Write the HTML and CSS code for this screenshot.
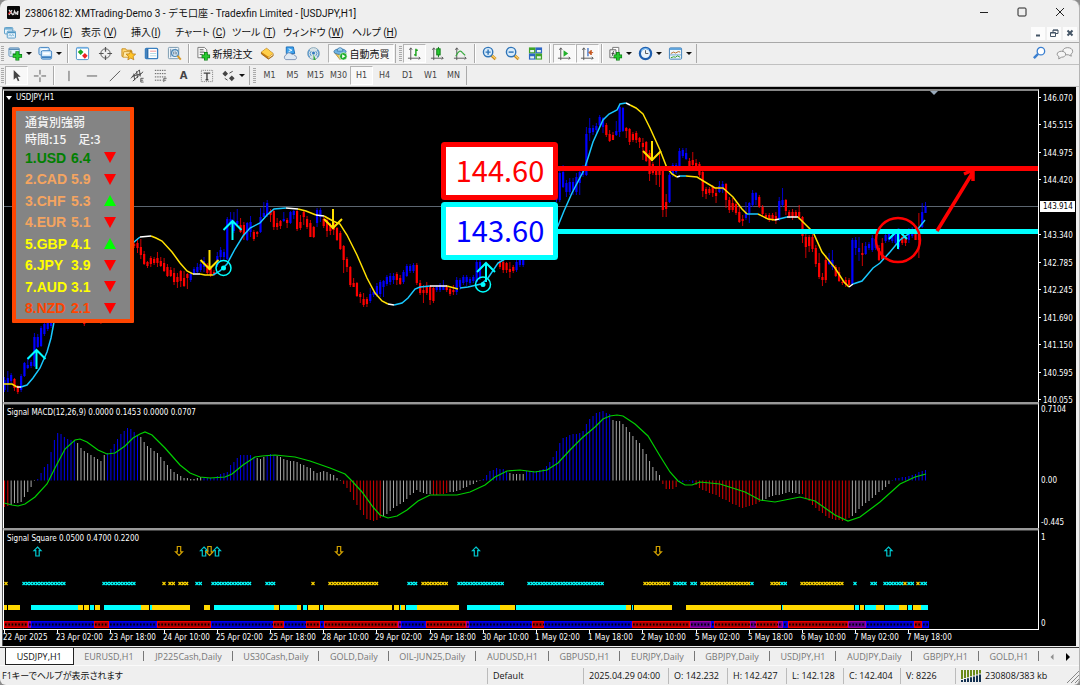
FILE: index.html
```html
<!DOCTYPE html>
<html lang="ja">
<head>
<meta charset="utf-8">
<title>23806182: XMTrading-Demo 3</title>
<link rel="stylesheet" href="styles.css">
</head>
<body>
<div class="window">
<header class="titlebar">
  <svg class="logo" viewBox="0 0 13 13"><rect width="13" height="13" rx="1" fill="#080808"/><path d="M2 4l4 5M5 4L2 9" stroke="#ddd" stroke-width="1.3"/><path d="M1.500 8l2-2" stroke="#e33" stroke-width="1.200"/><path d="M6.500 9l1-4 1.500 3 2-3-.5 4" stroke="#ddd" stroke-width="1.200" fill="none"/></svg>
  <h1>23806182: XMTrading-Demo 3 - デモ口座 - Tradexfin Limited - [USDJPY,H1]</h1>
  <div class="window-buttons">
    <button aria-label="最小化"><svg viewBox="0 0 10 10"><path d="M1 5.500h8" /></svg></button>
    <button aria-label="最大化"><svg viewBox="0 0 10 10"><rect x="1" y="1" width="8" height="8" rx="1"/></svg></button>
    <button aria-label="閉じる"><svg viewBox="0 0 10 10"><path d="M1 1l8 8M9 1L1 9"/></svg></button>
  </div>
</header>
<nav class="menubar">
  <svg class="menu-icon" viewBox="0 0 13 13" fill="#e8f4fc" stroke="#4f97c4"><rect x=".5" y=".5" width="9" height="7" rx="1"/><path d="M1 2h8" stroke-width="1.500"/><rect x="3.500" y="4.500" width="9" height="7.500" rx="1"/><path d="M4 6h8" stroke-width="1.500"/><path d="M5 10l1.500-2 1.500 2 1.500-2 1.500 2" fill="none" stroke-width=".7"/></svg>
  <div class="menus">
    <button>ファイル (<u>F</u>)</button><button>表示 (<u>V</u>)</button><button>挿入(<u>I</u>)</button><button>チャート (<u>C</u>)</button><button>ツール (<u>T</u>)</button><button>ウィンドウ (<u>W</u>)</button><button>ヘルプ (<u>H</u>)</button>
  </div>
  <div class="mdi-buttons">
    <button aria-label="チャート最小化"><svg viewBox="0 0 10 10"><path d="M3 7.500h4"/></svg></button>
    <button aria-label="チャート復元"><svg viewBox="0 0 10 10"><path d="M4 4V2h5v3.500H7M1.500 4.500h5v4h-5zM4 2.200h5M1.500 5h5" stroke-width="1"/></svg></button>
    <button aria-label="チャートを閉じる"><svg viewBox="0 0 10 10"><path d="M2.500 2.500l5 5M7.500 2.500l-5 5"/></svg></button>
  </div>
</nav>

<div class="toolbar">
  <i class="grip"></i>
  <button class="tool drop" aria-label="新規チャート"><svg viewBox="0 0 16 16"><rect x="1" y="2" width="11" height="9" rx="1" fill="#e6f2fb" stroke="#5b8db8"/><path d="M1 3.500h11" stroke="#5b8db8" stroke-width="1.500"/><path d="M3 9V5M5 8h4" stroke="#6a8" /><path d="M10 5.500v10M5 10.500h10" stroke="#0a7a12" stroke-width="4.200"/><path d="M10 6.200v8.600M5.700 10.500h8.600" stroke="#27c92f" stroke-width="2.600"/></svg><b></b></button>
  <button class="tool drop" aria-label="プロファイル"><svg viewBox="0 0 16 16" fill="#d5eafa" stroke="#3b7fc0"><rect x="1" y="1.500" width="11" height="8" rx="1.500"/><path d="M3.500 4h6" stroke="#fff" stroke-width="1.500"/><rect x="3.500" y="5" width="11" height="9" rx="1.500"/><path d="M4 12h10" stroke-width="2.200"/><path d="M5.500 8h7" stroke="#fff" stroke-width="2"/></svg><b></b></button>
  <i class="sep"></i>
  <button class="tool" aria-label="気配値表示"><svg viewBox="0 0 16 16"><rect x="1.500" y="1.500" width="13" height="13" rx="1.500" fill="#fff" stroke="#4a90cc"/><path d="M2 2.300h12" stroke="#7db8e8" stroke-width="1.500"/><path d="M6 3.500l3 3-3 3-3-3z" fill="#1ba824"/><path d="M10.500 7.500l3 3-3 3-3-3z" fill="#e22"/></svg></button>
  <button class="tool" aria-label="データウィンドウ"><svg viewBox="0 0 16 16" fill="none" stroke="#555"><circle cx="8" cy="8" r="5"/><path d="M8 1v5M8 10v5M1 8h5M10 8h5" stroke-width="1.300"/></svg></button>
  <button class="tool" aria-label="ナビゲーター"><svg viewBox="0 0 16 16"><path d="M1 3h4l1 1.500h5V11H1z" fill="#ffd97a" stroke="#c78b18"/><path d="M3 6h9l-2 6H2z" fill="#ffe9a8" stroke="#c78b18" stroke-width=".8"/><path d="M10.500 5l1.500 3.300 3.600.4-2.700 2.400.8 3.600-3.200-1.800-3.200 1.800.8-3.600-2.700-2.400 3.600-.4z" fill="#ffc52a" stroke="#b87a10" stroke-width=".8"/></svg></button>
  <button class="tool" aria-label="ターミナル"><svg viewBox="0 0 16 16"><rect x="1.500" y="2.500" width="13" height="11" rx="1" fill="#fff" stroke="#3a80c0" stroke-width="1.400"/><path d="M3.500 3v10" stroke="#2c6fae" stroke-width="2.400"/><path d="M6.500 5.500h6.500" stroke="#e77" stroke-width=".8"/><path d="M6.500 8h6.500M6.500 10.500h6.500" stroke="#9cd" stroke-width=".8"/></svg></button>
  <button class="tool" aria-label="ストラテジーテスター"><svg viewBox="0 0 16 16"><rect x="1.500" y="1.500" width="11" height="12" rx="1" fill="#eef5fa" stroke="#7796ac"/><path d="M4 3v9M6 4v3M9 3v2" stroke="#68a"/><circle cx="8.500" cy="7.500" r="3.700" fill="#cfe6f6" fill-opacity=".8" stroke="#4f88b5" stroke-width="1.200"/><path d="M7 6v3M8.700 5.500v3.500M10 6.500V9" stroke="#678" stroke-width=".8"/><path d="M11.200 10.500l3.500 4" stroke="#d99a26" stroke-width="2.200"/></svg></button>
  <i class="sep"></i>
  <button class="tool order"><svg viewBox="0 0 16 16"><path d="M2 1.500h7l2.500 2.500v8.500H2z" fill="#f8f8f8" stroke="#777"/><path d="M4 4h4M4 6.500h5M4 9h3" stroke="#555"/><path d="M10.500 6.500v9M6 11h9" stroke="#0a7a12" stroke-width="4"/><path d="M10.500 7.200v7.600M6.700 11h7.600" stroke="#27c92f" stroke-width="2.400"/></svg>新規注文</button>
  <button class="tool" aria-label="MetaEditor"><svg viewBox="0 0 16 16"><path d="M1.500 6.500L7 2.500l7 5.500v2.500L9 14 1.500 8.500z" fill="#c97f10" stroke="#8a5205" stroke-width=".7"/><path d="M1.500 6.500L7 2.500l7 5.500-5 3.500z" fill="#ffcf4a"/><path d="M9 12.500l5-3.500" stroke="#fff2c8"/></svg></button>
  <button class="tool" aria-label="クラウド"><svg viewBox="0 0 16 16"><path d="M3.500 1h7.500l1.500 7H3.500z" fill="#3fa4ee" stroke="#1a6cb8"/><path d="M6 3l3.500 1.500L6 6" stroke="#fff" fill="none"/><path d="M3 14.500a2.700 2.700 0 0 1 .3-5 3.300 3.300 0 0 1 6-.6 3 3 0 0 1 3.500 1.400A2.200 2.200 0 0 1 13 14.500z" fill="#dfe8f2" stroke="#7d93b5"/></svg></button>
  <button class="tool" aria-label="シグナル"><svg viewBox="0 0 16 16"><circle cx="8" cy="8" r="6.300" fill="#d7e3e8" stroke="#8aa7b8"/><path d="M4 12a6 6 0 0 1 0-8M12 12a6 6 0 0 0 0-8" stroke="#5e9bd0" fill="none" stroke-width="1.300"/><path d="M5.600 10.500a3.500 3.500 0 0 1 0-5M10.400 10.500a3.500 3.500 0 0 0 0-5" stroke="#4f90c8" fill="none"/><circle cx="8" cy="7.500" r="1.600" fill="#3279c0"/><path d="M8 8.500L10.500 15H8z" fill="#35a83c"/></svg></button>
  <button class="tool auto pressed"><svg viewBox="0 0 16 16"><path d="M1.500 7l6 7.500L14 8z" fill="#f0c858" stroke="#a57c1a" stroke-width=".7"/><ellipse cx="7.500" cy="6" rx="6.500" ry="3" fill="#6fb4e4" stroke="#2c6b9e" stroke-width=".8"/><path d="M4.500 5.500c0-5 6-5 6 0z" fill="#a4d4f4" stroke="#2c6b9e" stroke-width=".7"/><circle cx="11" cy="11" r="4" fill="#1fae2b" stroke="#fff" stroke-width=".6"/><path d="M9.800 8.900v4.200l3.400-2.100z" fill="#fff"/></svg>自動売買</button>
  <i class="edge"></i><i class="grip"></i>
  <button class="tool pressed" aria-label="バーチャート"><svg viewBox="0 0 16 16" fill="none"><path d="M4 2v13M1 13h13M2.500 4L4 2l1.500 2M12.500 11.500L14 13l-1.500 1.500" stroke="#555"/><path d="M9.500 3v8M7.500 9.500h2M9.500 4.500h2" stroke="#16a016" stroke-width="1.500"/></svg></button>
  <button class="tool" aria-label="ローソク足"><svg viewBox="0 0 16 16" fill="none"><path d="M4 2v13M1 13h13M2.500 4L4 2l1.500 2M12.500 11.500L14 13l-1.500 1.500" stroke="#555"/><path d="M9 1v11" stroke="#0a7a12"/><rect x="7.200" y="3" width="3.600" height="6.500" fill="#27c92f" stroke="#0a7a12"/></svg></button>
  <button class="tool" aria-label="ラインチャート"><svg viewBox="0 0 16 16" fill="none"><path d="M4 2v13M1 13h13M2.500 4L4 2l1.500 2M12.500 11.500L14 13l-1.500 1.500" stroke="#555"/><path d="M3 11c3-6 5-7 7-4l3 3" stroke="#35a83c" stroke-width="1.300"/></svg></button>
  <i class="sep"></i>
  <button class="tool" aria-label="ズームイン"><svg viewBox="0 0 16 16"><path d="M9.500 9.500l5 4.500" stroke="#c98a1c" stroke-width="3"/><path d="M10 9.500l4.500 4" stroke="#ffd772" stroke-width="1.300"/><circle cx="6.500" cy="6.500" r="5" fill="#d8ecfb" stroke="#2f74b8" stroke-width="1.500"/><path d="M3.800 6.500h5.400M6.500 3.800v5.400" stroke="#2f74b8" stroke-width="1.500"/></svg></button>
  <button class="tool" aria-label="ズームアウト"><svg viewBox="0 0 16 16"><path d="M9.500 9.500l5 4.500" stroke="#c98a1c" stroke-width="3"/><path d="M10 9.500l4.500 4" stroke="#ffd772" stroke-width="1.300"/><circle cx="6.500" cy="6.500" r="5" fill="#d8ecfb" stroke="#2f74b8" stroke-width="1.500"/><path d="M3.800 6.500h5.400" stroke="#2f74b8" stroke-width="1.500"/></svg></button>
  <button class="tool" aria-label="整列"><svg viewBox="0 0 16 16"><rect x="1" y="1.500" width="7" height="6.500" fill="#3fa428"/><rect x="8" y="1.500" width="7" height="6.500" fill="#2c66c4"/><rect x="1" y="8" width="7" height="6.500" fill="#2c66c4"/><rect x="8" y="8" width="7" height="6.500" fill="#3fa428"/><path d="M2.300 5.500h4.200M9.500 5.500h4.200M2.300 12h4.200M9.500 12h4.200" stroke="#e8f5ee" stroke-width="2.400"/></svg></button>
  <i class="sep"></i>
  <button class="tool pressed" aria-label="自動スクロール"><svg viewBox="0 0 16 16" fill="none"><path d="M4 2v13M1 13h13M2.500 4L4 2l1.500 2M12.500 11.500L14 13l-1.500 1.500" stroke="#555"/><path d="M7 4.500v7l5-3.500z" fill="#22b02c"/></svg></button>
  <button class="tool pressed" aria-label="チャートシフト"><svg viewBox="0 0 16 16" fill="none"><path d="M4 2v13M1 13h13M2.500 4L4 2l1.500 2M12.500 11.500L14 13l-1.500 1.500" stroke="#555"/><path d="M8.500 2v9" stroke="#2c66c4" stroke-width="1.300"/><path d="M9.500 7L12 4.500v5zM12 7h2" fill="#c4541c" stroke="#c4541c"/></svg></button>
  <i class="sep"></i>
  <button class="tool drop" aria-label="インディケータ"><svg viewBox="0 0 16 16"><path d="M5 1.500h6.500V10H5z" fill="#fff" stroke="#777"/><path d="M2 4h6.500v8.500H2z" fill="#f4f4f4" stroke="#666"/><path d="M6.500 5.500c-2 0-1 5.500-2.500 5.500M3.800 8h3" stroke="#444" fill="none"/><path d="M10.500 6.500v9M6 11h9" stroke="#0a7a12" stroke-width="4"/><path d="M10.500 7.200v7.600M6.700 11h7.600" stroke="#27c92f" stroke-width="2.400"/></svg><b></b></button>
  <button class="tool drop" aria-label="時間足"><svg viewBox="0 0 16 16"><circle cx="8" cy="8" r="6" fill="#e9f3fb" stroke="#1f5fae" stroke-width="2.400"/><path d="M3.500 5a5.500 5.500 0 0 1 8-1" stroke="#74b7f0" fill="none" stroke-width="1.200"/><path d="M8 4.500V8h3" stroke="#555" fill="none"/></svg><b></b></button>
  <button class="tool drop" aria-label="定型チャート"><svg viewBox="0 0 16 16"><rect x="1.500" y="2" width="13" height="12" rx="1" fill="#eef7fd" stroke="#3a7cb8"/><path d="M2 3.200h12" stroke="#5ba0da" stroke-width="2"/><path d="M3 8l3-1.500 2 1 3-1.500 2 .5" stroke="#b5651d" fill="none"/><path d="M2 9.500h12" stroke="#3a7cb8" stroke-width=".7"/><path d="M3 12.500l3-1 2 .5 2-1.500 3 1.500" stroke="#2f9a28" fill="none"/></svg><b></b></button>
  <i class="edge"></i>
  <span class="spacer"></span>
  <button class="tool" aria-label="検索"><svg viewBox="0 0 16 16" fill="none" stroke="#3a7fd0"><circle cx="9.500" cy="5.500" r="4" fill="#fff" stroke-width="1.400"/><path d="M6.500 8.500L2 13" stroke-width="2.600"/></svg></button>
  <button class="tool chat" aria-label="チャット"><svg viewBox="0 0 20 16" fill="#f6f6f6" stroke="#8a8a8a"><path d="M13 1.500c3 0 5.500 1.600 5.500 4 0 1.500-.8 2.600-2 3.200L17 11l-3-1.500c-4 .3-6.500-1.500-6.500-4 0-2.400 2.500-4 5.500-4z"/><path d="M6 5.500c2.700 0 4.700 1.300 4.700 3.300 0 2.100-2 3.400-4.500 3.300L3 14l.3-2.700c-1.200-.5-2-1.300-2-2.500C1.300 6.800 3.500 5.500 6 5.500z"/></svg></button>
</div>

<div class="toolbar lines">
  <i class="grip"></i>
  <button class="tool pressed" aria-label="カーソル"><svg viewBox="0 0 16 16"><path d="M5 2v10.500l2.600-2.400 1.900 4 1.600-.8-1.900-3.900h3.200z" fill="#444"/></svg></button>
  <button class="tool" aria-label="クロスヘア"><svg viewBox="0 0 16 16" stroke="#555"><path d="M8.500 2v5M8.500 10v5M2 8.500h5M10 8.500h5"/></svg></button>
  <i class="sep"></i>
  <button class="tool" aria-label="垂直線"><svg viewBox="0 0 16 16" stroke="#555"><path d="M8.500 3v11"/></svg></button>
  <button class="tool" aria-label="水平線"><svg viewBox="0 0 16 16" stroke="#555"><path d="M3 8.500h11"/></svg></button>
  <button class="tool" aria-label="トレンドライン"><svg viewBox="0 0 16 16" stroke="#555"><path d="M3 14L14 3"/></svg></button>
  <button class="tool" aria-label="チャネル"><svg viewBox="0 0 16 16" stroke="#444" fill="none"><path d="M1 11L10 2M3 14L14 4M4 6l1 7M7 3.500l1 7M10 2l1 7M2 9l10-3"/><path d="M14.500 11h-3v4h3M11.500 13h2.500" stroke-width=".9"/></svg></button>
  <button class="tool" aria-label="フィボナッチ"><svg viewBox="0 0 16 16" stroke="#555" fill="none"><path d="M2 2.500h12M2 6h12M2 9.500h12M2 13h8" stroke-dasharray="1.500 1"/><path d="M11.500 15v-4h3M11.500 13h2.500" stroke-width=".9"/></svg></button>
  <button class="tool letter">A</button>
  <button class="tool" aria-label="テキストラベル"><svg viewBox="0 0 16 16" fill="none"><rect x="2.500" y="2.500" width="12" height="12" stroke="#777" stroke-dasharray="1 1"/><path d="M5 5.500h7M8.500 5.500V13M7 12.500h3" stroke="#444" stroke-width="1.500"/></svg></button>
  <button class="tool drop" aria-label="矢印"><svg viewBox="0 0 16 16" fill="#444"><path d="M4.500 3l3 3-3 3-3-3zM11.500 8l3 3-3 3-3-3z"/><path d="M9 5.500l3.500-2M4 11l3 2" stroke="#444"/></svg><b></b></button>
  <i class="edge"></i><i class="grip wide"></i>
  <button class="tool">M1</button><button class="tool">M5</button><button class="tool">M15</button><button class="tool">M30</button><button class="tool pressed">H1</button><button class="tool">H4</button><button class="tool">D1</button><button class="tool">W1</button><button class="tool">MN</button>
  <i class="edge"></i>
</div>

<main class="chart">
  <section class="pane">
    <div class="plot top">
      <svg id="price" viewBox="4 91 1034 311"></svg>
      <div class="symbol">USDJPY,H1</div>
      <div class="strength">
        <div class="strength-head"><div>通貨別強弱</div><div>時間:15　足:3</div></div>
        <ul id="ranks"></ul>
      </div>
    </div>
    <div class="scale prices"><span>146.070</span><span>145.515</span><span>144.975</span><span>144.420</span><span class="now">143.914</span><span>143.340</span><span>142.785</span><span>142.245</span><span>141.690</span><span>141.150</span><span>140.595</span><span>140.055</span></div>
  </section>
  <section class="pane">
    <div class="plot">
      <svg id="macd" viewBox="4 405 1034 123"></svg>
      <div class="caption">Signal MACD(12,26,9) 0.0000 0.1453 0.0000 0.0707</div>
    </div>
    <div class="scale levels"><span>0.7104</span><span>0.00</span><span>-0.445</span></div>
  </section>
  <section class="pane">
    <div class="plot">
      <svg id="square" viewBox="4 531 1034 98"></svg>
      <div class="caption">Signal Square 0.0500 0.4700 0.2200</div>
    </div>
    <div class="scale ends"><span>1</span><span>0</span></div>
  </section>
  <svg id="times" class="times" viewBox="3 629 1073 17"></svg>
</main>

<nav class="tabs">
  <a class="active" href="#t1">USDJPY,H1</a><a href="#t2">EURUSD,H1</a><a href="#t3">JP225Cash,Daily</a><a href="#t4">US30Cash,Daily</a><a href="#t5">GOLD,Daily</a><a href="#t6">OIL-JUN25,Daily</a><a href="#t7">AUDUSD,H1</a><a href="#t8">GBPUSD,H1</a><a href="#t9">EURJPY,Daily</a><a href="#t10">GBPJPY,Daily</a><a href="#t11">USDJPY,H1</a><a href="#t12">AUDJPY,Daily</a><a href="#t13">GBPJPY,H1</a><a href="#t14">GOLD,H1</a>
  <div class="tab-scroll"><button class="off" aria-label="前へ"><svg viewBox="0 0 6 8"><path d="M4.500 1v6L1.500 4z"/></svg></button><button aria-label="次へ"><svg viewBox="0 0 6 8"><path d="M1 0v8l4-4z"/></svg></button></div>
</nav>
<footer class="status">
  <span>F1キーでヘルプが表示されます</span><span>Default</span><span>2025.04.29 04:00</span><span>O: 142.232</span><span>H: 142.427</span><span>L: 142.128</span><span>C: 142.404</span><span>V: 8226</span>
  <span class="net"><svg id="signal" viewBox="0 0 20 12"></svg>230808/383 kb<svg class="resize" viewBox="0 0 14 14" stroke="#888"><path d="M2 14L14 2M6 14l8-8M10 14l4-4"/></svg></span>
</footer>
</div>
<script src="chart.js"></script>
</body>
</html>
```
FILE: styles.css
```css
* { box-sizing: border-box; }
body { margin: 0; background: #8c8c8c; font-family: "Open Sans", "Noto Sans CJK JP", sans-serif; font-size: 10px; color: #111; }
button { border: 0; padding: 0; margin: 0; background: none; font: inherit; color: inherit; white-space: nowrap; }
svg { display: block; }
.window { background: #efefef; border-right: 1px solid #b4b4b4; border-radius: 8px 8px 6px 6px; overflow: hidden; }

.titlebar { display: flex; align-items: center; height: 24px; padding-left: 7px; }
.logo { width: 13px; height: 13px; }
.titlebar h1 { margin: 0 0 0 5px; font-size: 10px; font-weight: 400; font-family: Roboto, "Noto Sans CJK JP", sans-serif; white-space: nowrap; }
.window-buttons { display: flex; margin-left: auto; }
.window-buttons button { width: 38px; display: grid; place-items: center; }
.window-buttons svg { width: 10px; height: 10px; fill: none; stroke: #222; }

.menubar { display: flex; align-items: center; height: 19px; padding-left: 4px; border-bottom: 1px solid #a8a8a8; }
.menu-icon { width: 12px; height: 12px; margin-right: 7px; }
.menus { display: grid; grid-template-columns: 58px 50px 44px 57px 51px 69px 50px; font-family: Roboto, "Noto Sans CJK JP", sans-serif; font-feature-settings: "palt"; }
.menus button { text-align: left; line-height: 16px; }
.mdi-buttons { display: flex; gap: 2px; margin-left: auto; padding-right: 2px; }
.mdi-buttons button { width: 14px; height: 13px; display: grid; place-items: center; background: #fcfcfc; }
.mdi-buttons svg { width: 10px; height: 10px; fill: none; stroke: #456; stroke-width: 2; }

.toolbar { display: flex; align-items: stretch; height: 22px; padding: 1px 0 1px 1px; border-bottom: 1px solid #c0c0c0; }
.grip { width: 3px; margin: 2px 1px 2px 0; background: repeating-linear-gradient(#aaa 0 1px, #eee 1px 2px); }
.grip.wide { margin-right: 2px; }
.sep { width: 6px; background: linear-gradient(90deg, transparent 2px, #aaa 2px 3px, #fff 3px 4px, transparent 4px); }
.edge { width: 5px; background: linear-gradient(90deg, transparent 1px, #aaa 1px 2px, transparent 2px); }
.tool { width: 23px; display: flex; align-items: center; justify-content: center; flex: none; }
.tool svg { width: 15px; height: 15px; flex: none; }
.drop { width: 30px; justify-content: flex-start; padding-left: 3px; }
.drop b { border: 3px solid transparent; border-top-color: #111; border-bottom: 0; margin-left: 3px; }
.pressed { background: #f8f8f8; border: 1px solid #fff; border-top-color: #b4b4b4; border-left-color: #b4b4b4; }
.order { width: 64px; gap: 2px; }
.auto { width: 66px; gap: 2px; margin-left: 3px; }
.spacer { flex: 1; }
.chat { width: 28px; }
.chat svg { width: 18px; height: 15px; }
.lines { font-family: "DejaVu Sans", sans-serif; font-size: 8px; color: #444; }
.letter { font-size: 10px; font-weight: 700; }

.chart { margin: 0 3px 0 2px; padding-top: 2px; background: #000; border-left: 1px solid #555; color: #fff; font: 8px/8px "DejaVu Sans Condensed", "DejaVu Sans", sans-serif; font-stretch: condensed; }
.pane { display: flex; }
.plot { position: relative; flex: 1; border-left: 1px solid #fff; border-right: 1px solid #fff; border-top: 3px ridge #999; }
.plot.top { border-top: 2px solid #888; }
.plot > svg { width: 100%; height: auto; }
.symbol, .caption { position: absolute; left: 3px; top: 4px; line-height: 8px; }
.symbol { left: 12px; top: 3px; }
.symbol::before { content: ""; position: absolute; left: -10px; top: 2px; border: 3px solid transparent; border-top: 4px solid #fff; border-bottom: 0; }
.scale { width: 37px; display: flex; flex-direction: column; justify-content: space-between; padding: 4px 0 1px 2px; }
.levels { display: grid; grid-template-rows: 72fr 42fr 10px; padding: 4px 0 0 2px; margin-bottom: -1px; }
.prices { padding: 6px 0 0; margin-bottom: -3px; }
.prices span::before { content: ""; display: inline-block; width: 2px; height: 1px; margin-right: 2px; background: #fff; vertical-align: 3px; }
.prices .now { background: #fff; color: #000; line-height: 11px; margin: -4px 1px 1px; padding-left: 3px; }
.prices .now::before { display: none; }
.ends { padding: 6px 0 1px 2px; }
.times { width: 100%; height: auto; }
svg text { font-family: "DejaVu Sans Condensed", "DejaVu Sans", sans-serif; font-stretch: condensed; font-size: 8px; fill: #fff; }
svg text.level { font-family: "Noto Sans CJK JP", sans-serif; font-size: 29px; font-stretch: normal; text-anchor: middle; }

.strength { position: absolute; left: 8px; top: 16px; width: 122px; padding: 2px 9px 0; background: #848484; border: 4px solid #ff4500; border-radius: 1px; }
.strength-head { font: 500 12px/17px "Noto Sans CJK JP", sans-serif; color: #f4f4f4; white-space: nowrap; }
.strength ul { display: grid; height: 172px; margin: 0; padding: 0; list-style: none; font: 700 14px/20px "Liberation Sans", sans-serif; }
.strength li { display: grid; grid-template-columns: 46px 33px 12px; align-items: center; }
.strength li i { border: 6px solid transparent; border-top: 11px solid #f00; border-bottom: 0; }
.strength li i.up { border-top: 0; border-bottom: 11px solid #0f0; }
.green { color: #008000; } .sand { color: #f4a460; } .yellow { color: #ff0; } .orange { color: #ff4500; }

.tabs { display: flex; align-items: stretch; height: 18px; margin-top: 1px; padding-left: 5px; border-top: 1px solid #333; font-size: 9px; line-height: 17px; }
.tabs a { flex: 1 1 auto; text-align: center; text-decoration: none; color: #777; white-space: nowrap; background: linear-gradient(#777, #777) right 3px / 1px 10px no-repeat; }
.tabs a.active { background: #fff; color: #111; border: 1px solid #222; border-top: 0; }
.tab-scroll { display: flex; align-items: center; width: 40px; padding: 0 8px 0 10px; justify-content: space-between; }
.tab-scroll svg { width: 6px; height: 8px; }
.tab-scroll .off { opacity: .4; }
.status { display: grid; grid-template-columns: 1fr 96px 85px 59px 59px 57px 57px 55px 124px; height: 20px; align-items: center; font-size: 9px; line-height: 16px; border-top: 1px solid #fafafa; font-feature-settings: "palt"; }
.status span { padding-left: 5px; border-left: 1px solid #bbb; white-space: nowrap; }
.status span:first-child { border: 0; padding-left: 2px; }
.status .net { display: flex; align-items: center; gap: 4px; }
.net svg { width: 20px; height: 12px; }
.net .resize { width: 14px; height: 14px; margin-left: auto; }
```
FILE: chart.js
```js
const $ = id => document.getElementById(id);
const STEP = 3.325;
const barX = i => 4.5 + STEP * i;

// Candles: colour, high, low, and optionally body top and bottom
const runs = {
  0: 'b377 392 380 390,b371 392 378 385,b373 383,r378 391 379 388,r385 394,b374 392 376 390,b362 377 363 376,b357 369 365 368,b360 368,b333 367 337 366,b334 348 337 347,b326 347 328 346,b322 336,b320 331,b318 328',
  24: 'r315 326', 29: 'r315 324',
  39: 'r242 248,r238 253 243 248,r239 259 247 255,r251 265 254 264,r261 268 262 266,r256 267 258 264,r257 265 259 263,r252 267 258 263,r257 267 261 266,r258 272 263 271,r264 277 267 276,r267 277 270 276,r268 285 273 282,r273 288 277 282,r270 287 271 281,r271 287 278 286,r273 289 274 278,b272 282,b267 274 269 273,b263 273 267 272,b262 272,b257 272 261 267,r263 275 265 273,r267 277 268 275,r270 276,b252 267 256 265,b247 262 250 257,b249 260 252 257,b217 260 219 259,b212 227 219 225,b212 233 223 231,b209 225 221 224,r218 233 225 232,r222 240 225 235,b222 241 223 240,b216 237 222 232,r230 241 232 239,r231 237 232 234,b208 233 217 232,b202 217 213 217,b200 217 203 215,r209 222 211 215,r210 230 211 227,r218 230 223 227,r220 229 221 226,b212 222 219 221,r218 228 220 223,b211 224 212 223,b210 219 211 215,r210 231 211 229,r215 230 222 228,r211 225 212 217,r216 229 219 227,r220 237 223 237,r226 238 227 237,b208 227 210 223,b208 222 210 217,r217 228,r218 237 220 231,r223 235 225 231,r222 235 223 230,r227 241 228 240,r231 250 233 249,r245 273 246 260,r257 272 259 267,r266 287 267 285,r278 287 283 287,r282 297 283 296,r292 303 294 297,r293 307 299 305,r297 307 299 304,b288 303 294 301,b290 297,b283 297 286 295,b280 297 282 294,b280 297 281 287,b275 286 277 284,b273 285 276 282,b273 284 276 280,r272 285 274 280,r275 285 278 284,b270 284 272 282,b264 277 266 276,b264 273,b263 273,r263 285 265 283,r280 295 283 293,r285 303 290 293,r282 295 286 293,r285 305 286 300,r287 303 288 301,b285 292,b283 292,b280 290 286 290,r285 292,r288 296 289 294,r285 295 290 292,b277 295 280 292,b278 290 280 287,b275 285 277 283,b275 286 277 282,b277 285,b275 283,b260 283 262 282,b260 280',
  149: 'r260 269,r260 273 262 270,r262 273 263 270,r262 278 269 272,r265 273,b260 272,b258 267,b258 267',
  166: 'b173 202,b170 202 173 200,b165 188 172 187,b180 197 183 192,b178 195 182 192,b178 195 182 190,b173 195 177 192,b168 195 172 183,b165 177,b127 176 134 175,b118 141 128 133,b125 135 128 132,b123 133 126 130,b115 127,b117 133 118 127,r123 137 125 135,r130 142 134 141,r132 140 135 140,b121 136 131 135,b105 137 107 132,b107 132 108 131,r127 138 128 131,r128 145 129 142,r132 142,r131 143 133 140,r137 148 138 142,r138 160 143 147,r141 162 142 161,r150 181 153 174,r162 175,r170 185 171 175,r152 187 170 175,r168 217 170 210,r194 217 202 209,b173 203 175 202,b163 177,b163 174,b148 169 151 167,b148 158,b148 160 153 159,r158 170 161 168,r152 168 160 165,r159 170 163 167,r162 177,r170 197 172 191,r187 199 189 194,r187 195,r185 197 187 193,r187 203 193 196,b181 193 186 192,b181 193 184 190,r183 208 184 200,r197 213 200 210,r198 212 203 210,r202 215,r205 223 212 222,r215 226 219 221,b202 220 213 218,b202 223 203 213,b190 207 193 205,b192 205 193 200,r195 208 197 207,r205 217 207 214,r213 219,r213 222,r213 221,r212 224 216 220,b197 221 201 218,b188 207 200 205,r199 215 200 211,r210 218,r209 220 212 217,r210 218,r205 220 212 217,r216 243 217 236,r233 258 237 247,r235 252 237 246,r233 252 237 249,r245 267 248 264,r253 279 263 277,r273 286 277 280,r255 283 260 280,b253 265 260 264,b250 270 260 267,r265 277 267 276,r267 282 272 281,r280 285,r277 287 280 284,r278 287,b238 285 240 284,b237 255 240 248,b237 261 248 252,r243 266 253 255,b242 255 246 254,b242 250,b235 252 238 250,b237 250,r245 261 248 260,r238 260 243 259,b233 243,b232 242,b233 243,b230 245,b228 250 231 247,r235 245,r235 246 237 243,b228 243 232 240,b227 238,r228 240 230 240,r213 258 230 240,b203 228 212 227,b202 213 206 213'
};
let candles = '';
for (const [start, list] of Object.entries(runs)) {
  list.split(',').forEach((c, k) => {
    const col = c[0] === 'b' ? '#0000ff' : '#ff0000';
    const [hi, lo, top = hi + 2, bot = lo - 2] = c.slice(1).split(' ').map(Number);
    const x = barX(+start + k);
    candles += `<path d="M${x} ${hi}V${lo}" stroke="${col}" stroke-opacity=".8"/><rect x="${x - 1.1}" y="${top}" width="2.200" height="${Math.max(1, bot - top)}" fill="${col}"/>`;
  });
}

// Moving average, coloured by trend: c rising, y falling, w flat
const trend = [
  ['y', '4,384 12,384 17,387'], ['w', '17,387 21,387'], ['c', '21,387 27,385 33,378 40,368 47,352 51,338 54,322 60,300'],
  ['c', '130,245 134,242 140,237'], ['w', '140,237 151,236'], ['y', '151,236 156,238 162,241 172,252 180,263 187,271 193,274'], ['w', '193,274 200,274'], ['y', '200,274 205,275 213,275'],
  ['c', '213,275 220,271 227,264 235,249 243,236 250,228 260,223 267,215 274,209 286,208'], ['w', '286,208 298,209'], ['y', '298,209 306,211 316,215'], ['w', '316,215 324,216'],
  ['y', '324,216 333,221 340,224 347,235 357,255 367,278 375,293 382,301 388,304'], ['w', '388,304 394,305'], ['c', '394,305 402,303 408,298 415,289 420,287 430,286'], ['w', '430,286 447,286'], ['y', '447,286 458,289'],
  ['c', '460,288 468,287 481,284 488,278 498,263 505,259 540,250 558,226 564,211 572,193 584,170 588,158 593,142 603,120 609,114 617,110 620,104 626,103'], ['w', '626,103 630,105'],
  ['y', '630,105 636,108 643,114 650,128 660,150 667,168 672,174 677,177'], ['w', '677,177 680,176'], ['c', '680,176 686,176'], ['y', '686,176 697,177 705,182 715,188 723,188 733,197 742,209 747,214'], ['c', '747,214 758,214'],
  ['y', '758,214 768,219 775,220'], ['w', '775,220 779,219'], ['c', '779,219 787,217'], ['w', '787,217 798,217'], ['y', '798,217 805,224 813,232 822,252 835,268 844,282 849,287'], ['w', '849,287 853,284'],
  ['c', '853,284 862,281 868,274 873,268 880,263 890,252 900,240 910,233 918,229 925,220']
];
const tone = { c: '#18c8ff', y: '#ffe000', w: '#fff' };
const ma = trend.map(([k, p]) => `<polyline points="${p}" stroke="${tone[k]}" stroke-width="1.500" fill="none"/>`).join('');

const up = (x, y, h = 20) => `<path d="M${x} ${y + h}V${y + 1}M${x - 9} ${y + 10}L${x} ${y + 1}L${x + 9} ${y + 10}" stroke="#0ff" stroke-width="2" fill="none"/>`;
const down = (x, y) => `<path d="M${x} ${y}v20M${x - 9} ${y + 10}L${x} ${y + 19}L${x + 9} ${y + 10}" stroke="#ffe000" stroke-width="2" fill="none"/>`;
const target = (x, y) => `<circle cx="${x}" cy="${y}" r="7.500" stroke="#0ff" stroke-width="1.500" fill="none"/><circle cx="${x}" cy="${y}" r="2.500" fill="#0ff"/>`;
const level = (y, col, ink, label) => `<rect x="443.500" y="${y + 2.5}" width="112" height="53" rx="1" fill="#fff" stroke="${col}" stroke-width="5"/><text class="level" x="500" y="${y + 40}" style="fill:${ink}">${label}</text>`;
$('price').innerHTML = `<path d="M4 206.500H1038" stroke="#5c6670"/><path d="M930 91h8l-4 4z" fill="#9ab"/>` + candles + ma +
  up(36.5, 349) + up(232.5, 220) + up(486, 262) + up(898, 229) + down(209.5, 250) + down(333, 209) + down(652, 141) + target(223.5, 268) + target(483, 284.5) +
  `<path d="M556 168.500H1038" stroke="#f00" stroke-width="5"/><path d="M556 231.500H1038" stroke="#0ff" stroke-width="5"/>` +
  level(142, '#f00', '#f00', '144.60') + level(202, '#0ff', '#00f', '143.60') +
  `<circle cx="898" cy="240" r="22" fill="none" stroke="#f00" stroke-width="2.500"/><path d="M937 231L973 172M964 174l9-4v11" stroke="#f00" stroke-width="3.500" fill="none"/>`;

const ranks = [['1.USD', '6.4', 'green'], ['2.CAD', '5.9', 'sand'], ['3.CHF', '5.3', 'sand', 1], ['4.EUR', '5.1', 'sand'], ['5.GBP', '4.1', 'yellow', 1], ['6.JPY', '3.9', 'yellow'], ['7.AUD', '3.1', 'yellow'], ['8.NZD', '2.1', 'orange']];
$('ranks').innerHTML = ranks.map(([n, v, c, u]) => `<li class="${c}"><span>${n}</span><span>${v}</span><i class="${u ? 'up' : ''}"></i></li>`).join('');

// MACD histogram: bar index and tip height, interpolated between entries
const tips = '0:507 1:506 3:503 5:502 6:497 8:487 9:481 10:479 11:473 12:467 13:464 14:452 15:440 16:433 17:434 19:439 21:441 22:443 23:448 25:453 27:457 29:461 30:455 31:453 33:444 35:434 37:428 38:429 39:432 41:437 43:446 46:453 49:465 51:472 54:478 57:479 59:477 61:478 63:478 65:474 67:472 68:465 70:458 71:455 74:455 75:457 77:459 78:457 80:454 82:456 85:460 87:461 90:465 92:468 94:473 96:471 99:475 101:480 102:484 104:492 105:500 107:510 109:519 111:521 113:518 115:514 117:508 120:502 122:495 124:490 126:493 128:494 130:495 133:493 136:491 138:488 140:485 143:481 144:479 146:471 148:468 150:469 152:473 154:474 156:474 157:471 160:471 162:469 164:462 166:451 167:443 168:438 170:435 173:433 174:431 175:424 176:419 178:413 180:411 182:414 183:420 185:421 187:427 189:436 191:443 193:454 195:467 197:475 198:484 199:489 201:489 202:487 203:482 206:481 208:485 210:490 214:495 218:502 222:508 226:504 230:497 236:492 240:494 244:508 248:518 252:521 255:516 258:506 262:495 266:484 268:478 272:476 277:470'.split(' ').map(p => p.split(':').map(Number));
const tones = [[2, 'r'], [10, 'g'], [22, 'b'], [31, 'g'], [41, 'b'], [60, 'g'], [76, 'b'], [79, 'g'], [82, 'b'], [102, 'g'], [114, 'r'], [129, 'g'], [134, 'r'], [144, 'g'], [152, 'b'], [157, 'g'], [183, 'b'], [198, 'g'], [203, 'r'], [208, 'b'], [228, 'r'], [240, 'g'], [255, 'r'], [267, 'g'], [278, 'b']];
const ink = { r: '#d80000', g: '#a8a8a8', b: '#0000f0' };
let bars = '';
for (let i = 0, k = 0; i < 278; i++) {
  while (k < tips.length - 2 && tips[k + 1][0] < i) k++;
  const [a, ya] = tips[k], [b, yb] = tips[k + 1];
  const y = Math.round(ya + (yb - ya) * (i - a) / (b - a));
  const c = tones.find(t => i < t[0])[1];
  bars += `<path d="M${barX(i)} 480.500V${y}" stroke="${ink[c]}"/>`;
}
$('macd').innerHTML = bars + `<polyline fill="none" stroke="#00d000" stroke-width="1.200" points="4,503 12,505 18,506 25,504 35,497 47,484 55,468 65,449 75,440 80,439 87,442 98,450 107,454 115,453 125,446 133,438 140,434 145,432 152,435 165,448 180,465 190,473 200,477 210,478 225,477 232,474 243,465 255,457 262,456 275,455 295,457 310,461 330,468 345,474 352,481 362,492 373,507 380,515 388,518 397,516 407,510 418,501 430,495 457,495 470,492 485,485 495,477 507,471 520,470 535,472 547,470 558,463 570,450 582,438 595,427 603,419 610,416 617,415 623,416 635,424 648,436 660,456 670,472 678,481 685,485 692,485 700,482 720,484 745,492 760,500 775,502 800,497 815,501 835,515 848,521 860,517 880,502 900,484 915,477 926,474"/>`;

// Signal Square rows
const parse = s => s.split(' ').map(t => [t[0], ...t.slice(1).split('-').map(Number)]);
const fill = { c: '#0ff', y: '#ffd700', r: '#b00000', b: '#0000c0', p: '#600090' };
const rim = { r: '#f00000', b: '#0000ff', p: '#a000a0' };
let rows = '';
for (const [c, a, b] of parse('y4-9 c22-66 c102-136 y162-165 y168-175 y178-189 c195-202 c211-252 c265-275 y311-315 y328-378 c407-418 y421-448 c457-505 c527-604 y643-671 c673-687 c690-697 y700-750 c750-754 y770-780 c780-787 y800-844 c853-857 c870-877 c883-903 y903-907 c907-916 y916-920 c920-927'))
  for (let x = a + 2; x <= b - 1; x += STEP) rows += `<path d="M${x - 1.5} 582l3 3M${x - 1.5} 585l3-3" stroke="${fill[c]}" stroke-width="1.200"/>`;
for (const [c, a, b] of parse('y4-7 y8-20 c31-78 y78-83 y84-89 c90-94 y95-100 c104-141 y141-149 c150-152 y152-190 y204-210 c214-274 y274-279 c280-297 y297-301 c303-307 y308-319 c320-323 y324-392 y394-399 c400-401 y401-405 c406-417 y417-459 c467-500 y500-515 c516-626 y626-631 c632-633 y634-672 y686-781 c782-783 y783-854 c855-859 y860-864 c865-876 y876-884 c885-899 y899-907 c908-912 y913-921 c921-928'))
  rows += `<rect x="${a}" y="605" width="${b - a}" height="5" fill="${fill[c]}"/>`;
for (const [c, a, b] of parse('r4-28 p28-31 b31-94 r94-109 b109-157 r157-211 b211-273 r273-284 b284-306 r306-320 b320-324 r324-398 p398-401 b401-426 r426-466 p466-469 b469-532 r532-544 b544-632 r632-690 p690-711 b711-714 r714-750 p750-756 r756-778 p778-783 b783-788 r788-848 p848-866 b866-914 r914-922 b922-929')) {
  rows += `<rect x="${a + .5}" y="621.500" width="${b - a - 1}" height="6" fill="${fill[c]}" stroke="${rim[c]}"/>`;
  for (let x = a + 1; x < b - 1; x += STEP) rows += `<rect x="${x}" y="623.500" width="1.600" height="2" fill="#000"/>`;
}
const hollow = (x, y, dir, col) => `<path transform="translate(${x} ${y}) scale(1 ${dir})" d="M0-4.500L3.500-.8H1.700V4.500H-1.700V-.8H-3.500z" fill="none" stroke="${col}" stroke-width="1.200"/>`;
for (const x of [37.5, 204, 217, 476, 888.5]) rows += hollow(x, 551.5, 1, '#00c8d0');
for (const x of [179, 209.5, 339, 658]) rows += hollow(x, 551, -1, '#d0a000');
$('square').innerHTML = rows;

const times = ['22 Apr 2025', '23 Apr 02:00', '23 Apr 18:00', '24 Apr 10:00', '25 Apr 02:00', '25 Apr 18:00', '28 Apr 10:00', '29 Apr 02:00', '29 Apr 18:00', '30 Apr 10:00', '1 May 02:00', '1 May 18:00', '2 May 10:00', '5 May 02:00', '5 May 18:00', '6 May 10:00', '7 May 02:00', '7 May 18:00'];
$('times').innerHTML = '<path d="M3 629.500H1039" stroke="#fff"/>' + times.map((t, i) => `<path d="M${Math.round(4 + i * 53.2) + .5} 630v3" stroke="#fff"/><text x="${Math.round(3 + i * 53.2)}" y="640">${t}</text>`).join('');

$('signal').innerHTML = Array.from({ length: 7 }, (_, i) => `<path d="M${i * 3 + 1} 0V${9 - i * .9}" stroke="#6a8a1a" stroke-width="2"/><path d="M${i * 3 + 1} ${10 - i * .9}V12" stroke="#123050" stroke-width="2"/>`).join('');
```
